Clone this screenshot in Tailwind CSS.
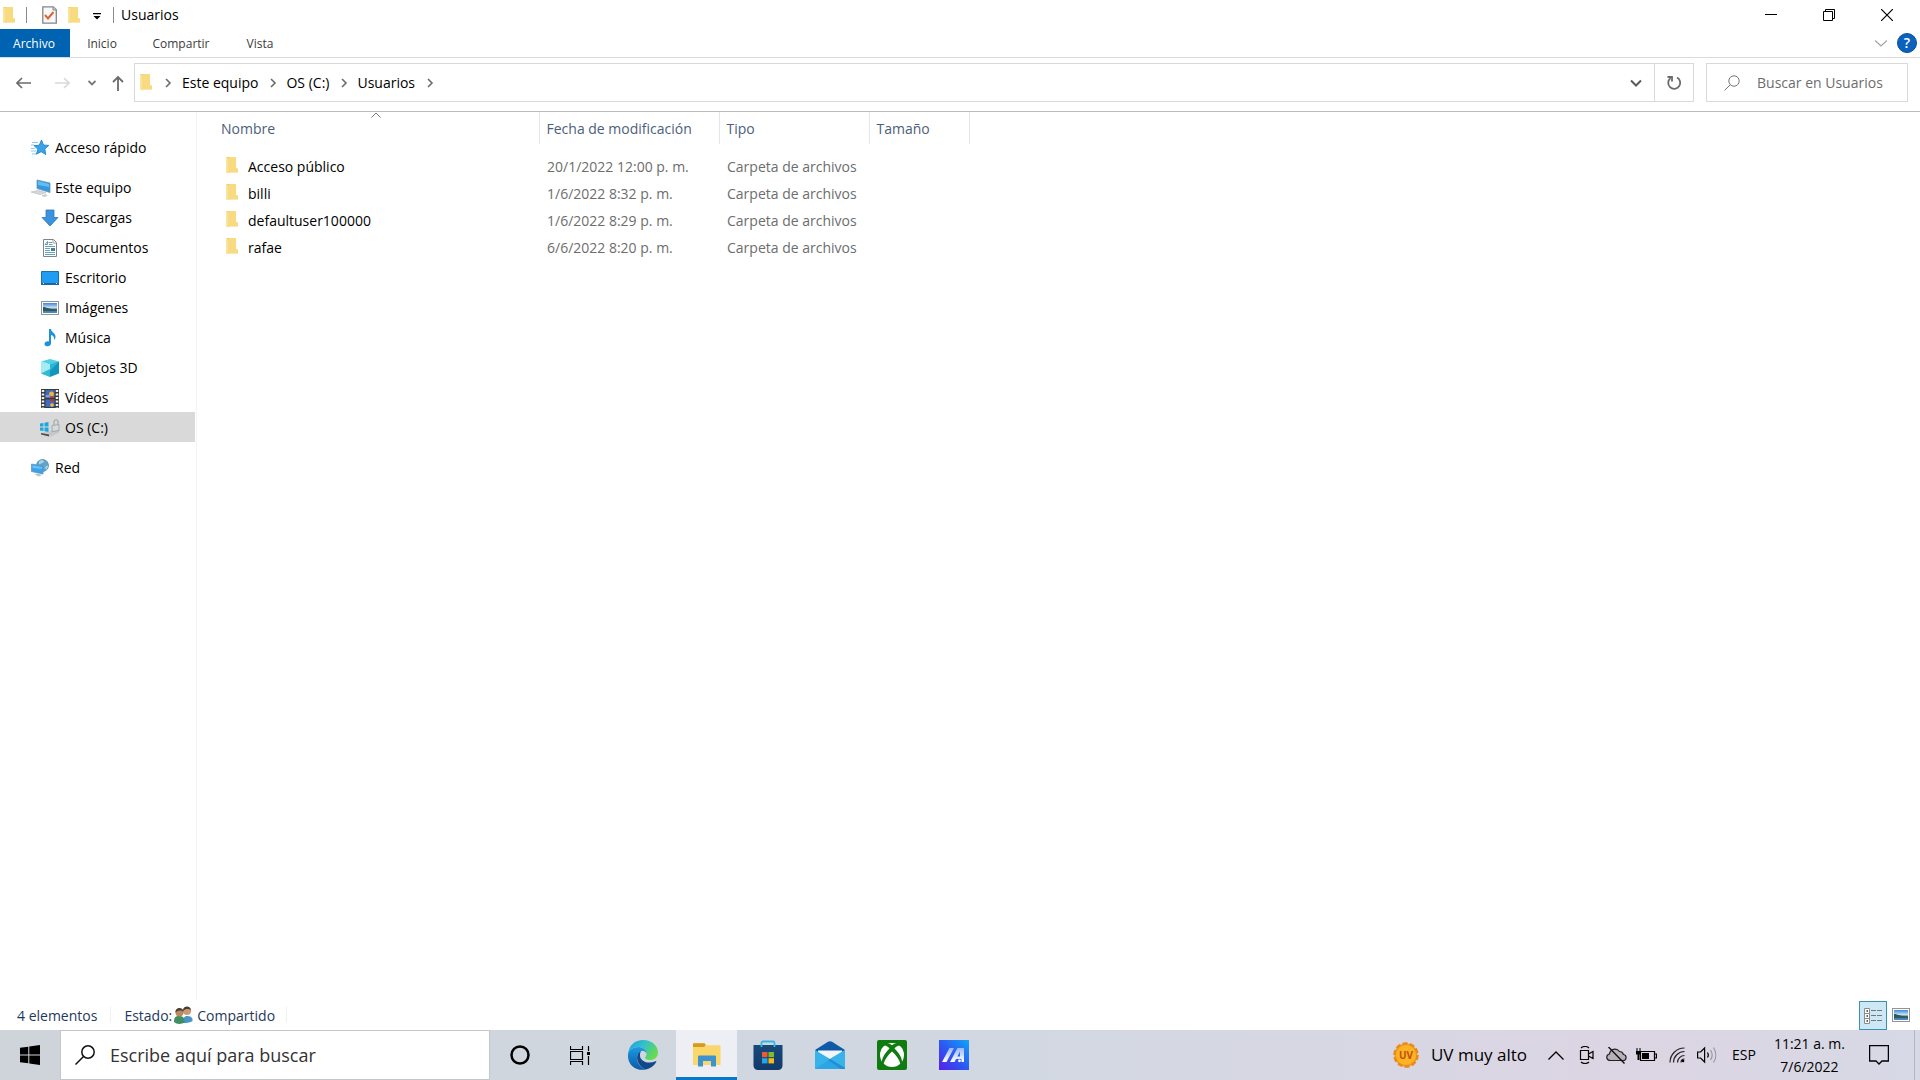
<!DOCTYPE html>
<html lang="es">

<head>
    <meta charset="UTF-8">
    <meta name="viewport" content="width=device-width, initial-scale=1.0">
    <title>Usuarios</title>
    <script src="https://cdn.jsdelivr.net/npm/@tailwindcss/browser@4"></script>
</head>

<body class="flex flex-col h-screen overflow-hidden bg-white text-black text-[14px] leading-5 font-['Open_Sans','Noto_Sans',sans-serif]">

    <!-- Shared icons -->
    <svg class="absolute w-0 h-0" aria-hidden="true">
        <defs>
            <linearGradient id="folderFront" x1="0" y1="0" x2="1" y2="0">
                <stop offset="0" stop-color="#fbe7a6" />
                <stop offset="1" stop-color="#f7d877" />
            </linearGradient>
            <linearGradient id="sky" x1="0" y1="0" x2="0" y2="1">
                <stop offset="0" stop-color="#3f86d8" />
                <stop offset="0.5" stop-color="#d4e8f5" />
                <stop offset="0.6" stop-color="#3f6f78" />
                <stop offset="1" stop-color="#4b8fc6" />
            </linearGradient>
        </defs>
        <symbol id="folder" viewBox="0 0 14 18">
            <path d="M1 1h10v11l2 1v3.500H1z" fill="#f2cf6c" />
            <path d="M4 1h7v11l2 .8V16H4z" fill="#f8da80" />
            <path d="M1 1l4 2.500V15l-1.500 2.500L1 15.500z" fill="url(#folderFront)" />
        </symbol>
        <symbol id="picture" viewBox="0 0 18 14">
            <rect x=".5" y=".5" width="17" height="13" fill="#fff" stroke="#8f9499" />
            <rect x="2" y="2" width="14" height="10" fill="url(#sky)" />
            <path d="M2 6c3 0 5 2 14 2.500v1.500H2z" fill="#30595f" />
        </symbol>
        <symbol id="chevronRight" viewBox="0 0 8 10">
            <path d="M2 1l4 4-4 4" fill="none" stroke="#6b6b6b" stroke-width="1.600" />
        </symbol>
    </svg>

    <!-- Title bar -->
    <header class="flex items-center h-[29px] shrink-0">
        <svg class="w-[14px] h-[18px] ml-[2px]"><use href="#folder" /></svg>
        <span class="w-px h-4 ml-[10px] bg-[#8a8a8a]"></span>
        <button type="button" class="ml-[15px]" aria-label="Propiedades">
            <svg class="w-[15px] h-[18px]" viewBox="0 0 15 18">
                <path d="M.8.8h10.500l3 3v13.400H.8z" fill="#f7f8fa" stroke="#858585" stroke-width="1.300" />
                <path d="M11 1v3h3" fill="#ddd" stroke="#858585" />
                <path d="M3 9l3 3.500L11.500 6" fill="none" stroke="#e0622f" stroke-width="2" />
            </svg>
        </button>
        <button type="button" class="ml-[10px]" aria-label="Nueva carpeta">
            <svg class="w-[14px] h-[18px]"><use href="#folder" /></svg>
        </button>
        <button type="button" class="ml-[12px] mt-1" aria-label="Personalizar barra">
            <svg class="w-[8px] h-[7px]" viewBox="0 0 8 7">
                <path d="M0 0h8v1.300H0zM.5 3h7L4 6.500z" />
            </svg>
        </button>
        <span class="w-px h-4 ml-3 mr-[7px] bg-[#8a8a8a]"></span>
        <h1>Usuarios</h1>
        <div class="flex ml-auto mr-1 h-full">
            <button type="button" class="flex items-center justify-center w-[58px]" aria-label="Minimizar">
                <svg class="w-3 h-3" viewBox="0 0 12 12"><path d="M0 5.500h12" stroke="#000" /></svg>
            </button>
            <button type="button" class="flex items-center justify-center w-[58px]" aria-label="Restaurar">
                <svg class="w-3 h-3" viewBox="0 0 12 12" fill="none" stroke="#000"><path d="M.5 2.500h9v9h-9zM2.500 2.500v-2h9v9h-2" /></svg>
            </button>
            <button type="button" class="flex items-center justify-center w-[58px]" aria-label="Cerrar">
                <svg class="w-3 h-3" viewBox="0 0 12 12"><path d="M0 0l12 12M12 0L0 12" stroke="#000" stroke-width="1.200" /></svg>
            </button>
        </div>
    </header>

    <!-- Ribbon tabs -->
    <nav class="flex h-[29px] shrink-0 border-b border-[#dadbdc] text-[12px] text-[#3b3b3b]">
        <button type="button" class="w-[70px] pt-0.5 pr-0.5 bg-[#0063b1] text-white">Archivo</button>
        <button type="button" class="w-16 pt-0.5">Inicio</button>
        <button type="button" class="w-24 pt-0.5 pr-0.5">Compartir</button>
        <button type="button" class="w-[60px] pt-0.5">Vista</button>
        <button type="button" class="ml-auto mr-[10px]" aria-label="Expandir la cinta">
            <svg class="w-3 h-[7px]" viewBox="0 0 12 7"><path d="M0 .5l6 5.500 6-5.500" fill="none" stroke="#a0a0a0" stroke-width="1.200" /></svg>
        </button>
        <button type="button" class="flex items-center justify-center self-center size-5 mr-[3px] rounded-full bg-[#0b62bd] border border-[#084f99] text-[14px] font-semibold text-white" aria-label="Ayuda">?</button>
    </nav>

    <!-- Navigation and address bar -->
    <div class="flex items-center h-[54px] pb-[4px] pr-3 shrink-0 border-b border-[#b9bcbd]">
        <div class="flex items-center w-[134px] shrink-0">
            <button type="button" class="ml-4" aria-label="Atrás">
                <svg class="w-[15px] h-3" viewBox="0 0 15 12" fill="none" stroke="#6b6b6b" stroke-width="1.600"><path d="M15 6H1M6 1L1 6l5 5" /></svg>
            </button>
            <button type="button" class="ml-6" aria-label="Adelante">
                <svg class="w-[15px] h-3" viewBox="0 0 15 12" fill="none" stroke="#d9d9d9" stroke-width="1.600"><path d="M0 6h14M9 1l5 5-5 5" /></svg>
            </button>
            <button type="button" class="ml-[18px]" aria-label="Ubicaciones recientes">
                <svg class="w-2 h-[6px]" viewBox="0 0 8 6"><path d="M.5 1L4 4.500 7.500 1" fill="none" stroke="#777" stroke-width="1.800" /></svg>
            </button>
            <button type="button" class="ml-4" aria-label="Subir">
                <svg class="w-3 h-4" viewBox="0 0 12 16" fill="none" stroke="#6b6b6b" stroke-width="1.800"><path d="M6 16V2M1 7l5-5 5 5" /></svg>
            </button>
        </div>
        <div class="flex items-center flex-1 h-[39px] border border-[#d9d9d9]">
            <svg class="w-[14px] h-[18px] ml-1 mb-0.5"><use href="#folder" /></svg>
            <svg class="w-2 h-[10px] ml-[11px]"><use href="#chevronRight" /></svg>
            <button type="button" class="ml-[10px]">Este equipo</button>
            <svg class="w-2 h-[10px] ml-[11px]"><use href="#chevronRight" /></svg>
            <button type="button" class="ml-[9px]">OS (C:)</button>
            <svg class="w-2 h-[10px] ml-[11px]"><use href="#chevronRight" /></svg>
            <button type="button" class="ml-[9px]">Usuarios</button>
            <svg class="w-2 h-[10px] ml-[11px]"><use href="#chevronRight" /></svg>
            <button type="button" class="ml-auto mr-3" aria-label="Ubicaciones anteriores">
                <svg class="w-3 h-2" viewBox="0 0 12 8"><path d="M1 1.500l5 5 5-5" fill="none" stroke="#5a5a5a" stroke-width="2" /></svg>
            </button>
            <button type="button" class="flex items-center justify-center w-[39px] h-full border-l border-[#d9d9d9]" aria-label="Actualizar">
                <svg class="w-4 h-4" viewBox="0 0 16 16"><path d="M11 2.500a6 6 0 1 1-6.500.6M1.500 2H6v4.500" fill="none" stroke="#6b6b6b" stroke-width="1.800" /></svg>
            </button>
        </div>
        <label class="flex items-center w-[202px] h-[39px] ml-3 border border-[#d9d9d9]">
            <svg class="w-4 h-4 ml-[17px] shrink-0" viewBox="0 0 16 16" fill="none" stroke="#777"><circle cx="10" cy="6" r="5.200" /><path d="M6.300 9.700L.5 15.500" /></svg>
            <input type="text" placeholder="Buscar en Usuarios" aria-label="Buscar en Usuarios" class="w-full min-w-0 ml-[17px] outline-none placeholder:text-[#6d6d6d]">
        </label>
    </div>

    <main class="flex flex-1 min-h-0">
        <!-- Sidebar -->
        <aside class="w-[197px] shrink-0 pt-5 pr-px border-r border-[#f3f3f3]">
            <a href="#" class="flex items-center h-[30px] pt-0.5 pl-[31px]">
                <svg class="w-[18px] h-[18px] mr-[6px]" viewBox="0 0 18 18">
                    <path d="M10.500 1l2 5 5.300.4-4 3.600 1 5.600-4.600-2.900-4.800 2.500 1.400-5-3.800-3.600 5.200-.4z" fill="#3aa3e8" stroke="#1c7cc4" stroke-width=".8" />
                    <path d="M1 3.500h6M0 6h3M0 9.500h4M0 12h5M1 15h4" stroke="#8cc9f0" />
                </svg>
                Acceso rápido
            </a>
            <a href="#" class="flex items-center h-[30px] mt-[10px] pt-0.5 pl-[31px]">
                <svg class="w-[20px] h-[18px] mr-1" viewBox="0 0 20 18">
                    <path d="M6 1l13 3v9.500L6 9.500z" fill="#3497df" stroke="#6c93ae" stroke-width=".8" />
                    <path d="M7 2l11 3v3L7 6z" fill="#63bdf2" />
                    <path d="M0 13l7-1.500 8 2-6 2zM11 16.500l4-1 1 1-3 1z" fill="#d4d8db" stroke="#b3b8bc" stroke-width=".6" />
                </svg>
                Este equipo
            </a>
            <a href="#" class="flex items-center h-[30px] pt-0.5 pl-[41px]">
                <svg class="w-[18px] h-[18px] mr-[6px]" viewBox="0 0 18 18"><path d="M5 1h8v7.500h4L9 17 1 8.500h4z" fill="#3b93dd" stroke="#2d78bd" stroke-width=".8" /></svg>
                Descargas
            </a>
            <a href="#" class="flex items-center h-[30px] pt-0.5 pl-[41px]">
                <svg class="w-[18px] h-[18px] mr-[6px]" viewBox="0 0 18 18">
                    <path d="M2.500.5h10l3 3v14h-13z" fill="#fff" stroke="#7d8388" />
                    <path d="M12 1v3h3" fill="none" stroke="#9ba0a5" />
                    <path d="M4 5.500L6.500 2.500v3zM7.500 3.500H11M8 5.500h3.500M4 7.500h10M4 9.500h5M4 11.500h5M4 13.500h10M4 15.500h10" fill="none" stroke="#3d87a6" stroke-width=".8" />
                    <path d="M10 9h4v3h-4z" fill="#4a7d95" />
                </svg>
                Documentos
            </a>
            <a href="#" class="flex items-center h-[30px] pt-0.5 pl-[41px]">
                <svg class="w-[18px] h-[14px] mr-[6px]" viewBox="0 0 18 14"><path d="M.5.500h17v12h-17z" fill="#1f9df5" stroke="#1d6fa8" /><path d="M0 13.200h18" stroke="#1b5f93" stroke-width="1.500" /><path d="M2 12.500h1M15 12.500h1" stroke="#fff" /></svg>
                Escritorio
            </a>
            <a href="#" class="flex items-center h-[30px] pt-0.5 pl-[41px]">
                <svg class="w-[18px] h-[14px] mr-[6px]"><use href="#picture" /></svg>
                Imágenes
            </a>
            <a href="#" class="flex items-center h-[30px] pt-0.5 pl-[41px]">
                <svg class="w-[18px] h-[18px] mr-[6px]" viewBox="0 0 18 18"><path d="M8 0h2c0 3 4.500 4 4.500 7.500 0 1.500-.5 2.500-1.500 3.500.5-3-.8-4.500-3-5v8.500c0 1.500-1.500 2.800-3.300 2.800S3.500 16.500 3.500 15s1.500-2.700 3.200-2.700c.5 0 1 0 1.300.2z" fill="#1e90dc" /></svg>
                Música
            </a>
            <a href="#" class="flex items-center h-[30px] pt-0.5 pl-[41px]">
                <svg class="w-[18px] h-[18px] mr-[6px]" viewBox="0 0 18 18">
                    <path d="M0 2.500L9 0l9 2.500L9 5.500z" fill="#4fd0e6" />
                    <path d="M0 2.500l9 3V18l-9-3.500z" fill="#a4ebf3" />
                    <path d="M0 14.500L9 10v8z" fill="#35b9cf" />
                    <path d="M18 2.500l-9 3V18l9-3.500z" fill="#1296bd" />
                    <path d="M18 2.500l-9 3V12z" fill="#29b4d8" />
                </svg>
                Objetos 3D
            </a>
            <a href="#" class="flex items-center h-[30px] pt-0.5 pl-[41px]">
                <svg class="w-[18px] h-[19px] mr-[6px]" viewBox="0 0 18 19">
                    <path d="M0 0h18v19H0z" fill="#3a3a3a" />
                    <path d="M2 1v18M16 1v18" stroke="#f2f2f2" stroke-width="2.500" stroke-dasharray="2 1.500" />
                    <path d="M4.500 1h9v7.500h-9zM4.500 10.500h9V18h-9z" fill="#3f6bc2" />
                    <circle cx="10.500" cy="5" r="2.500" fill="#e8b53a" /><path d="M4.500 6h5v2.500h-5z" fill="#7d9fe0" />
                    <path d="M9 7h4v1.500H9z" fill="#c9433a" /><circle cx="11" cy="16" r="1.800" fill="#efc13a" /><path d="M9 10.500h4v2H9z" fill="#b83a34" />
                </svg>
                Vídeos
            </a>
            <a href="#" class="flex items-center h-[30px] pt-0.5 pl-[40px] bg-[#d9d9d9]">
                <svg class="w-[20px] h-[18px] mr-[5px]" viewBox="0 0 20 18">
                    <path d="M0 4.500l3.500-.6v3.600H0zM4.500 3.700L8.500 3v4.500h-4zM0 8.500h3.500v3.600L0 11.500zM4.500 8.500h4V13l-4-.7z" fill="#18a8df" />
                    <path d="M1 14l9-1.500 9-2v3l-8 4L1 15.500z" fill="#c3c7ca" />
                    <path d="M1 14l8 1.500v2L1 15.500z" fill="#4b4f52" />
                    <path d="M12 6.500l7-1v6l-7 1z" fill="#d6dadd" stroke="#8e9397" stroke-width=".7" />
                    <path d="M14 6V3c0-3 4-3 4 0v2.500" fill="none" stroke="#a3a7aa" stroke-width="1.200" />
                </svg>
                OS (C:)
            </a>
            <a href="#" class="flex items-center h-[30px] mt-[10px] pt-0.5 pl-[31px]">
                <svg class="w-[18px] h-[18px] mr-[6px]" viewBox="0 0 18 18">
                    <circle cx="11.500" cy="6.500" r="6" fill="#5fa6c9" stroke="#3f7fa8" stroke-width=".7" />
                    <path d="M8 2.500c2-2 5-1 5 0s-3 2-5 3zM14 8c2-1 3-2 3-1s-1 3-2 4z" fill="#a8d6e4" />
                    <path d="M.5 5l11.500 2v8L.5 12.500z" fill="#3ba2ea" stroke="#5f95bb" stroke-width=".8" />
                    <path d="M1.500 6.200L11 8v2L1.500 9z" fill="#69c0f5" />
                    <path d="M3.500 15.500l3-1 4.500 1.500-3 1.500z" fill="#b9c3ca" />
                </svg>
                Red
            </a>
        </aside>

        <!-- File list -->
        <div class="flex-1">
            <table class="table-fixed w-[772px] text-left text-[#6d6d6d]">
                <thead class="text-[#4c607a]">
                    <tr class="h-8">
                        <th class="relative w-[342px] pl-6 pb-[3px] pt-1 font-normal border-r border-[#e5e5e5]">
                            Nombre
                            <svg class="absolute top-0 left-[174px] w-[10px] h-[6px]" viewBox="0 0 10 6"><path d="M.5 5.500L5 1l4.500 4.500" fill="none" stroke="#777" /></svg>
                        </th>
                        <th class="w-[180px] pl-[7px] pt-1 pb-[3px] font-normal border-r border-[#e5e5e5]">Fecha de modificación</th>
                        <th class="w-[150px] pl-[7px] pt-1 pb-[3px] font-normal border-r border-[#e5e5e5]">Tipo</th>
                        <th class="w-[100px] pl-[7px] pt-1 pb-[3px] font-normal border-r border-[#e5e5e5]">Tamaño</th>
                    </tr>
                </thead>
                <tbody>
                    <tr class="h-[9px]"><td colspan="4"></td></tr>
                    <tr class="h-[27px]">
                        <td class="text-black"><div class="flex items-center pl-7"><svg class="w-[14px] h-[18px] mb-[3px] mr-[9px]"><use href="#folder" /></svg>Acceso público</div></td>
                        <td class="pl-2">20/1/2022 12:00 p. m.</td>
                        <td class="pl-2">Carpeta de archivos</td>
                        <td></td>
                    </tr>
                    <tr class="h-[27px]">
                        <td class="text-black"><div class="flex items-center pl-7"><svg class="w-[14px] h-[18px] mb-[3px] mr-[9px]"><use href="#folder" /></svg>billi</div></td>
                        <td class="pl-2">1/6/2022 8:32 p. m.</td>
                        <td class="pl-2">Carpeta de archivos</td>
                        <td></td>
                    </tr>
                    <tr class="h-[27px]">
                        <td class="text-black"><div class="flex items-center pl-7"><svg class="w-[14px] h-[18px] mb-[3px] mr-[9px]"><use href="#folder" /></svg>defaultuser100000</div></td>
                        <td class="pl-2">1/6/2022 8:29 p. m.</td>
                        <td class="pl-2">Carpeta de archivos</td>
                        <td></td>
                    </tr>
                    <tr class="h-[27px]">
                        <td class="text-black"><div class="flex items-center pl-7"><svg class="w-[14px] h-[18px] mb-[3px] mr-[9px]"><use href="#folder" /></svg>rafae</div></td>
                        <td class="pl-2">6/6/2022 8:20 p. m.</td>
                        <td class="pl-2">Carpeta de archivos</td>
                        <td></td>
                    </tr>
                </tbody>
            </table>
        </div>
    </main>

    <!-- Status bar -->
    <footer class="flex items-center h-[30px] shrink-0 pl-[17px] pr-[10px] text-[#1e395b]">
        <span class="pt-0.5">4 elementos</span>
        <span class="w-px h-4 mx-[13px] bg-[#f0f0f0]"></span>
        <span class="pt-0.5">Estado:</span>
        <svg class="w-[19px] h-[18px] ml-[2px] mr-1" viewBox="0 0 19 18">
            <path d="M9 17c0-5 1-7 4.500-7S19 12 18.500 15c-2 1.500-5 2-9.500 2z" fill="#4a95c9" />
            <circle cx="13" cy="5" r="4" fill="#c79a72" /><path d="M9 5c-.5-6 8-6 8-.5-2-2-5-2-8 .5z" fill="#4c3d33" />
            <path d="M0 16c0-4 1-6 5-6s6 2 5.500 6.500c-3 2-8 2-10.500-.5z" fill="#3f8f63" />
            <circle cx="5.500" cy="6.500" r="4" fill="#b98a62" /><path d="M1.500 6.500c-.5-6 8-6 8-.5-2-2-5-2-8 .5z" fill="#4c3d33" />
        </svg>
        <span class="pt-0.5">Compartido</span>
        <span class="w-px h-4 ml-[11px] bg-[#f0f0f0]"></span>
        <button type="button" class="flex items-center justify-center self-stretch w-7 ml-auto mt-px bg-[#cce8f4] border border-[#3d8fb5]" aria-label="Detalles">
            <svg class="w-[18px] h-4" viewBox="0 0 18 16" fill="none" stroke="#8c8c8c">
                <path d="M.5.500h5v15h-5zM.5 5.500h5M.5 10.500h5" fill="#fff" />
                <path d="M7 2.500h5M13 2.500h5M7 7.500h5M13 7.500h5M7 12.500h5M13 12.500h5" stroke="#777" />
                <path d="M2.500 3h1.500M2.500 8h1.500M2.500 13h1.500" stroke="#333" stroke-width="1.500" />
            </svg>
        </button>
        <button type="button" class="ml-[5px]" aria-label="Miniaturas grandes">
            <svg class="w-[18px] h-[14px]"><use href="#picture" /></svg>
        </button>
    </footer>

    <!-- Taskbar -->
    <div class="flex h-[50px] shrink-0 bg-linear-to-r from-[#cfd4da] via-[#d2d9e4] via-70% to-[#d7d9e6]">
        <button type="button" class="flex items-center justify-center w-[60px]" aria-label="Inicio">
            <svg class="w-5 h-5" viewBox="0 0 20 20"><path d="M0 2.800L8.300 1.700v7.800H0zM9.300 1.500L20 0v9.500H9.300zM0 10.500h8.300v7.800L0 17.200zM9.300 10.500H20V20L9.300 18.500z" /></svg>
        </button>
        <label class="flex items-center w-[430px] bg-white border border-[#c3c7cc]">
            <svg class="w-5 h-5 ml-[14px] shrink-0" viewBox="0 0 20 20" fill="none" stroke="#111" stroke-width="1.500"><circle cx="13" cy="7" r="6.200" /><path d="M8.500 11.500L.5 19.500" /></svg>
            <input type="text" placeholder="Escribe aquí para buscar" aria-label="Escribe aquí para buscar" class="w-full min-w-0 ml-[15px] text-[18px] outline-none placeholder:text-[#333]">
        </label>
        <button type="button" class="flex items-center justify-center w-[60px]" aria-label="Cortana">
            <svg class="w-5 h-5" viewBox="0 0 20 20"><circle cx="10" cy="10" r="8.500" fill="none" stroke="#000" stroke-width="2.500" /></svg>
        </button>
        <button type="button" class="flex items-center justify-center w-[60px]" aria-label="Vista de tareas">
            <svg class="w-5 h-[19px]" viewBox="0 0 20 19" fill="none" stroke="#000">
                <path d="M.5 0v3.500h12V0M.5 19v-3.500h12V19M.5 5.500h12v8H.5zM18.500 0v5M18.500 10v9" stroke-width="1.200" />
                <path d="M17 6h3v3h-3z" fill="#000" stroke="none" />
            </svg>
        </button>
        <button type="button" class="flex items-center justify-center w-[66px]" aria-label="Microsoft Edge">
            <svg class="w-[30px] h-[30px]" viewBox="0 0 30 30">
                <defs>
                    <linearGradient id="edgeTop" x1="0" y1="0" x2="1" y2=".6"><stop offset="0" stop-color="#1b9de2" /><stop offset=".5" stop-color="#35c1c8" /><stop offset="1" stop-color="#67dc4c" /></linearGradient>
                    <linearGradient id="edgeLeft" x1="0" y1="0" x2="0" y2="1"><stop offset="0" stop-color="#1c9be6" /><stop offset="1" stop-color="#0c59a4" /></linearGradient>
                </defs>
                <path d="M0 14C1 5 7 0 15 0c9 0 15 6 15 12.500 0 5-4 7.500-8 7.500-3.500 0-5-1.300-5-2.200s1.500-1.300 1.500-4C18.500 10 15 7 10.500 7 5 7 1 10 0 14z" fill="url(#edgeTop)" />
                <path d="M0 14c1-4 5-7 10.500-7 4.500 0 8 3 8 6.500-1-2-3-3-5-2.500-3 .8-5 4-4.500 8 .5 5 4 9 9 10.500C8 31.500-1 25 0 14z" fill="url(#edgeLeft)" />
                <path d="M13 11.300C7 13 7.500 26 18 29.500c4-.7 8-3.500 10.300-7.500.4-.6-.2-1-.8-.7-7 3.200-15 .2-15.500-5.300-.1-2 .3-3.800 1-4.700z" fill="#114a8b" />
            </svg>
        </button>
        <button type="button" class="flex items-center justify-center w-[61px] bg-[#eeeff4] border-b-3 border-[#0a78c8]" aria-label="Explorador de archivos">
            <svg class="w-7 h-6 mt-[3px]" viewBox="0 0 28 24">
                <path d="M0 3V1.500C0 .7.500.3 1.200.3h10l1.800 2h13.500c.6 0 1 .4 1 1V22H0z" fill="#fbd668" />
                <path d="M0 4V1.500C0 .7.500.3 1.200.3h10.500l1 1.700-1.500 2z" fill="#d69a1c" />
                <path d="M5 23.500V14c0-1 .6-1.500 1.500-1.500h15c1 0 1.500.5 1.500 1.500v9.500h-5V18h-8v5.500z" fill="#3d93cf" />
            </svg>
        </button>
        <button type="button" class="flex items-center justify-center w-[62px]" aria-label="Microsoft Store">
            <svg class="w-[30px] h-[30px]" viewBox="0 0 30 30">
                <defs><linearGradient id="bag" x1="0" y1="0" x2="0" y2="1"><stop offset="0" stop-color="#174a7c" /><stop offset="1" stop-color="#123a6a" /></linearGradient></defs>
                <path d="M8.500 7V3c0-1 .5-1.500 1.500-1.500h10c1 0 1.500.5 1.500 1.500v4" fill="none" stroke="#38b5e3" stroke-width="1.800" />
                <path d="M.5 5h29v20.500c0 2.500-1.700 4.500-4.500 4.500H5C2.200 30 .5 28 .5 25.500z" fill="url(#bag)" />
                <path d="M8.500 5v2M21.500 5v2" stroke="#38b5e3" stroke-width="1.800" />
                <path d="M9 12h5.500v5.200H9z" fill="#ef5a33" /><path d="M15.500 12H21v5.200h-5.500z" fill="#7fbc2c" />
                <path d="M9 18.200h5.500v5.200H9z" fill="#27a5e8" /><path d="M15.500 18.200H21v5.200h-5.500z" fill="#fdb913" />
            </svg>
        </button>
        <button type="button" class="flex items-center justify-center w-[62px]" aria-label="Correo">
            <svg class="w-[30px] h-[28px]" viewBox="0 0 30 28">
                <path d="M0 9L13 .8c1.300-.8 2.700-.8 4 0L30 9l-4 4H4z" fill="#0e5aa7" />
                <path d="M3 9.500h24v8L15 20 3 17z" fill="#f3f6f9" />
                <path d="M0 9l15 9L30 9v19H0z" fill="#38b3ea" />
                <path d="M15 18l15 10V9z" fill="#38b3ea" /><path d="M15 18l15 9v1H0z" fill="#2ba5e4" /><path d="M15 18l15 9v1H26L13 19z" fill="#1f8ed6" />
            </svg>
        </button>
        <button type="button" class="flex items-center justify-center w-[62px]" aria-label="Xbox">
            <svg class="w-[30px] h-[30px]" viewBox="0 0 30 30">
                <rect width="30" height="30" rx="2" fill="#107c10" />
                <circle cx="15" cy="15" r="12" fill="#fff" />
                <path d="M8.500 3.800C11 3 13.500 4.200 15 5.200c1.500-1 4-2.200 6.500-1.400l2 2c-2-.8-4.500 1-6 2.700 4.500 4.500 8 10 7.500 14l-1.500 1.700C22.500 19.500 19 15 15 11.500 11 15 7.500 19.500 6.500 24.200L5 22.500c-.5-4 3-9.500 7.500-14C11 6.800 8.500 5 6.500 5.800z" fill="#107c10" />
            </svg>
        </button>
        <button type="button" class="flex items-center justify-center w-[62px]" aria-label="MyASUS">
            <svg class="w-[30px] h-[30px]" viewBox="0 0 30 30">
                <defs>
                    <linearGradient id="asus" x1="0" y1="1" x2="1" y2="0"><stop offset="0" stop-color="#5a1ee8" /><stop offset=".5" stop-color="#2a5bf2" /><stop offset="1" stop-color="#12a4f6" /></linearGradient>
                    <linearGradient id="asusBar" x1="0" y1="1" x2="0" y2="0"><stop offset="0" stop-color="#fff" /><stop offset="1" stop-color="#9db9fb" /></linearGradient>
                </defs>
                <path d="M0 0h30v30H0z" fill="url(#asus)" />
                <path d="M3 22L10.500 8H15L7.500 22z" fill="url(#asusBar)" />
                <path d="M11 22l7.500-14H25v10h-4v-6.500L15.500 22z" fill="url(#asusBar)" />
                <path d="M17 16.500h8V19h-9z" fill="#e4ebff" /><circle cx="20.500" cy="20.800" r="1.400" fill="#fff" /><path d="M22.500 19H25v3h-2.500z" fill="#fff" />
            </svg>
        </button>

        <!-- Notification area -->
        <div class="flex items-center flex-1 justify-end bg-linear-to-r from-transparent via-[#dcd5e3] via-70% to-[#d7d9e6]">
            <button type="button" class="flex items-center mr-[21px] text-[17px]">
                <svg class="w-[26px] h-[26px] mr-3" viewBox="0 0 26 26" aria-hidden="true">
                    <circle cx="13" cy="13" r="11.500" fill="#f29b1d" stroke="#e98a1c" stroke-width="2.500" stroke-dasharray="5 2.200" />
                    <circle cx="13" cy="13" r="10" fill="#fcb324" />
                    <text x="13" y="17" text-anchor="middle" font-size="10" font-weight="700" fill="#c4500c">UV</text>
                </svg>
                UV muy alto
            </button>
            <button type="button" class="mr-[15px]" aria-label="Mostrar iconos ocultos">
                <svg class="w-4 h-[9px]" viewBox="0 0 16 9"><path d="M.5 8.500L8 1l7.500 7.500" fill="none" stroke="#000" stroke-width="1.300" /></svg>
            </button>
            <button type="button" class="mr-3" aria-label="Reunirse ahora">
                <svg class="w-[15px] h-[18px]" viewBox="0 0 15 18" fill="none" stroke="#000" stroke-width="1.200"><path d="M1.500 4.500h8v9h-8zM9.500 8l4.500-2.500v7L9.500 10M2 2c2-2 6-2 8 0M2 16c2 2 6 2 8 0" /></svg>
            </button>
            <button type="button" class="mr-[9px]" aria-label="OneDrive">
                <svg class="w-[21px] h-[17px]" viewBox="0 0 21 17"><path d="M4.500 13.500C0 13.500-.5 8 3.500 7 4 2.500 10 0 13.500 4.500c3 0 3.500 1.500 4 3 3.500.5 3.500 6-.5 6z" fill="#b5b2ba" stroke="#222" stroke-width="1.200" /><path d="M2.500 0l16 16.500" stroke="#111" stroke-width="1.400" /></svg>
            </button>
            <button type="button" class="mr-3" aria-label="Batería">
                <svg class="w-[21px] h-[14px]" viewBox="0 0 21 14"><path d="M4.500 3.500h14v9h-14zM18.500 6h2v4h-2" fill="none" stroke="#000" stroke-width="1.200" /><path d="M6 5h7v6H6z" /><path d="M0 3h5v3.500H3.500V12h-2V6.500H0zM.5 0h1v3h-1zM3.500 0h1v3h-1z" /></svg>
            </button>
            <button type="button" class="mr-3" aria-label="Wi-Fi">
                <svg class="w-[16px] h-[16px]" viewBox="0 0 16 16" fill="none" stroke="#222" stroke-width="1.200"><path d="M1 15.500A14.500 14.500 0 0 1 15.500 1M4.500 15.500a11 11 0 0 1 11-11M8.500 15.500a7 7 0 0 1 7-7" /><path d="M12 15.500a3.500 3.500 0 0 1 3.500-3.500" /><circle cx="14" cy="14" r="1.300" fill="#000" stroke="none" /></svg>
            </button>
            <button type="button" class="mr-[15px]" aria-label="Volumen">
                <svg class="w-5 h-[18px]" viewBox="0 0 20 18" fill="none" stroke="#000" stroke-width="1.200"><path d="M.6 6h3l4-4v14l-4-4h-3z" /><path d="M10.500 6.500c1 1.500 1 3.500 0 5" /><path d="M13.500 4c2 3 2 7 0 10M16.500 1.500c3 4.500 3 10.500 0 15" stroke="#99959f" /></svg>
            </button>
            <button type="button" class="mr-[18px] text-[14px]">ESP</button>
            <button type="button" class="mr-[24px] text-[14px] leading-[23px] text-center">11:21 a. m.<br>7/6/2022</button>
            <button type="button" class="mr-[25px]" aria-label="Notificaciones">
                <svg class="w-5 h-5" viewBox="0 0 20 20"><path d="M.6.6h18.800v15.400h-6.400l-3 3-3-3H.6z" fill="none" stroke="#000" stroke-width="1.300" /></svg>
            </button>
            <button type="button" class="w-[6px] h-full border-l border-[#b4b6c2]" aria-label="Mostrar escritorio"></button>
        </div>
    </div>
</body>

</html>
